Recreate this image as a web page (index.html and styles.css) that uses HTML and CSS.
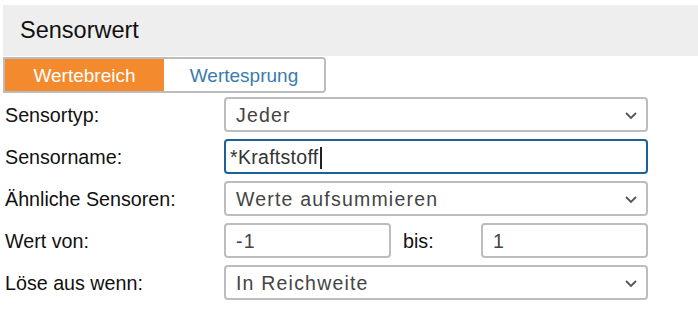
FILE: index.html
```html
<!DOCTYPE html>
<html lang="de">
<head>
<meta charset="utf-8">
<link rel="stylesheet" href="styles.css">
</head>
<body>
<div class="panel">
  <div class="header">Sensorwert</div>
  <div class="tabs">
    <div class="tab active">Wertebreich</div>
    <div class="tab">Wertesprung</div>
  </div>
  <div class="form">
    <div class="label">Sensortyp:</div>
    <div class="field select"><span>Jeder</span><svg class="chev" viewBox="0 0 12 7" width="12" height="7"><path d="M1 1l5 5 5-5" fill="none" stroke="#555" stroke-width="1.8"/></svg></div>

    <div class="label">Sensorname:</div>
    <div class="field focus"><span>*Kraftstoff</span><span class="caret"></span></div>

    <div class="label">Ähnliche Sensoren:</div>
    <div class="field select"><span>Werte aufsummieren</span><svg class="chev" viewBox="0 0 12 7" width="12" height="7"><path d="M1 1l5 5 5-5" fill="none" stroke="#555" stroke-width="1.8"/></svg></div>

    <div class="label">Wert von:</div>
    <div class="range">
      <div class="field small"><span>-1</span></div>
      <div class="bis">bis:</div>
      <div class="field small"><span>1</span></div>
    </div>

    <div class="label">Löse aus wenn:</div>
    <div class="field select"><span>In Reichweite</span><svg class="chev" viewBox="0 0 12 7" width="12" height="7"><path d="M1 1l5 5 5-5" fill="none" stroke="#555" stroke-width="1.8"/></svg></div>
  </div>
</div>
</body>
</html>
```
FILE: styles.css
```css
html, body {
  margin: 0;
  padding: 0;
  background: #fff;
}
body {
  font-family: "Liberation Sans", Arial, sans-serif;
  color: #111;
}
.panel {
  padding: 5px 0 0 3px;
}
.header {
  background: #eeeeee;
  height: 51px;
  box-sizing: border-box;
  padding-left: 17px;
  font-size: 23.5px;
  line-height: 51px;
  color: #111;
}
.tabs {
  display: flex;
  margin-top: 1px;
  width: 323px;
  height: 36px;
  box-sizing: border-box;
  border: 2px solid #bcbcbc;
  border-radius: 0 4px 4px 0;
  overflow: hidden;
}
.tab {
  width: 161px;
  display: flex;
  align-items: center;
  justify-content: center;
  font-size: 19px;
  color: #3a7bb0;
  background: #fff;
  padding-top: 1px;
}
.tab.active {
  background: #f38a2d;
  color: #fff;
  width: 160px;
}
.form {
  display: grid;
  grid-template-columns: 219px 424px;
  grid-auto-rows: 35px;
  row-gap: 7px;
  margin-top: 4px;
  margin-left: 2px;
}
.label {
  display: flex;
  align-items: center;
  font-size: 19.7px;
  color: #111;
  padding-top: 1px;
}
.field {
  box-sizing: border-box;
  height: 35px;
  border: 2px solid #bdbdbd;
  border-radius: 4px;
  display: flex;
  align-items: center;
  padding: 2px 9px 0 10px;
  font-size: 19.5px;
  color: #444;
  letter-spacing: 1.2px;
}
.field.select {
  justify-content: space-between;
}
.field.focus {
  border-color: #1b6396;
  color: #333;
  letter-spacing: 0.3px;
  padding-left: 4px;
}
.caret {
  display: inline-block;
  width: 2px;
  height: 22px;
  background: #222;
  margin-left: 1px;
}
.chev {
  display: block;
}
.range {
  display: flex;
  align-items: center;
}
.field.small {
  width: 167px;
  flex: none;
}
.bis {
  width: 90px;
  box-sizing: border-box;
  padding-left: 12px;
  padding-top: 1px;
  font-size: 19.7px;
  color: #111;
}
```
